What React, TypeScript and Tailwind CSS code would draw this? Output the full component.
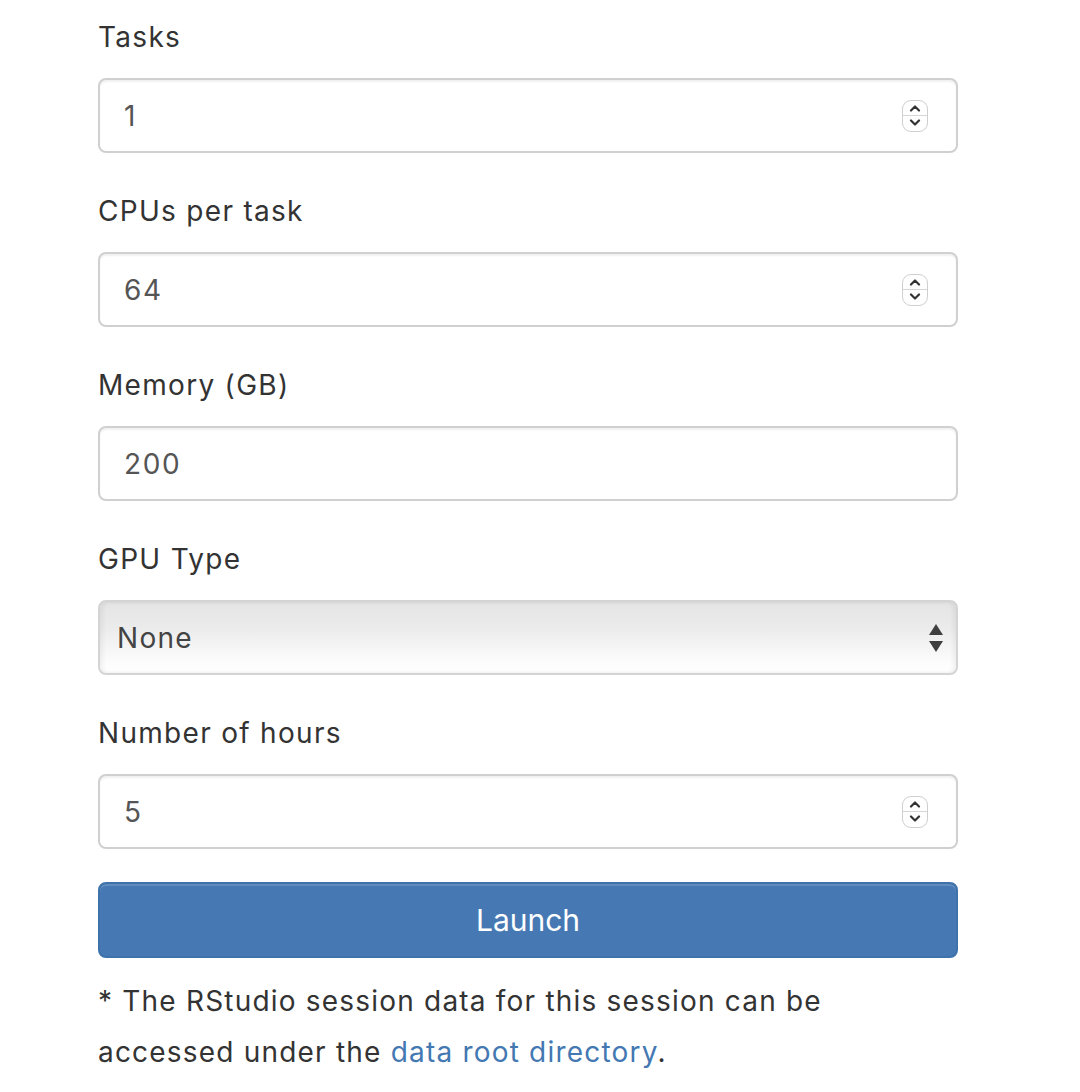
const font = { fontFamily: 'Inter, "Noto Sans", "Liberation Sans", sans-serif' };

function Spinner() {
  return (
    <div className="absolute right-[28px] top-1/2 flex h-[32px] w-[26px] -translate-y-1/2 flex-col overflow-hidden rounded-[9px] border border-[#cfcfcf] bg-white">
      <div className="flex flex-1 items-center justify-center border-b border-[#d6d6d6]">
        <svg width="12" height="8" viewBox="0 0 12 8" fill="none">
          <path d="M2 6.5 6 2.5 10 6.5" stroke="#333" strokeWidth="2.2" strokeLinecap="round" strokeLinejoin="round" />
        </svg>
      </div>
      <div className="flex flex-1 items-center justify-center">
        <svg width="12" height="8" viewBox="0 0 12 8" fill="none">
          <path d="M2 1.5 6 5.5 10 1.5" stroke="#333" strokeWidth="2.2" strokeLinecap="round" strokeLinejoin="round" />
        </svg>
      </div>
    </div>
  );
}

function Field({ label, value, spinner = true }: { label: string; value: string; spinner?: boolean }) {
  return (
    <div className="mb-[38px]">
      <label className="mb-[21px] block text-[28px] leading-[40px] tracking-[1.3px] text-[#333]">{label}</label>
      <div className="relative flex h-[75px] items-center rounded-[8px] border-2 border-[#d0d0d0] bg-white pl-[24px] text-[28px] tracking-[1.6px] text-[#555] shadow-[inset_0_2px_2px_rgba(0,0,0,0.06)]">
        {value}
        {spinner ? <Spinner /> : null}
      </div>
    </div>
  );
}

export default function App() {
  return (
    <div className="min-h-[1092px] bg-white" style={font}>
      <div className="ml-[98px] w-[860px] pt-[17px]">
        <Field label="Tasks" value="1" />
        <Field label="CPUs per task" value="64" />
        <Field label="Memory (GB)" value="200" spinner={false} />

        <div className="mb-[38px]">
          <label className="mb-[21px] block text-[28px] leading-[40px] tracking-[1.3px] text-[#333]">GPU Type</label>
          <div className="relative flex h-[75px] items-center rounded-[8px] border-2 border-[#d4d4d4] bg-[linear-gradient(to_bottom,#e4e4e4_0%,#ececec_40%,#fbfbfb_80%,#ffffff_100%)] pl-[17px] text-[28px] tracking-[1.3px] text-[#444] shadow-[inset_3px_0_4px_rgba(0,0,0,0.05),inset_-3px_0_4px_rgba(0,0,0,0.05)]">
            None
            <svg className="absolute right-[12px] top-1/2 -translate-y-1/2" width="16" height="30" viewBox="0 0 16 30">
              <path d="M8 1 15 12H1Z" fill="#3f3f3f" />
              <path d="M1 18H15L8 29Z" fill="#3f3f3f" />
            </svg>
          </div>
        </div>

        <Field label="Number of hours" value="5" />

        <button className="-mt-[5px] flex h-[76px] w-full items-center justify-center rounded-[8px] border-2 border-[#3f71ab] bg-[#4679b3] text-[30px] text-white shadow-[inset_0_2px_0_rgba(255,255,255,0.15)]">
          Launch
        </button>

        <p className="mt-[18px] text-[28px] leading-[51px] tracking-[1.2px] text-[#333]">
          * The RStudio session data for this session can be
          <br />
          accessed under the <a className="text-[#4378b2]">data root directory</a>.
        </p>
      </div>
    </div>
  );
}
